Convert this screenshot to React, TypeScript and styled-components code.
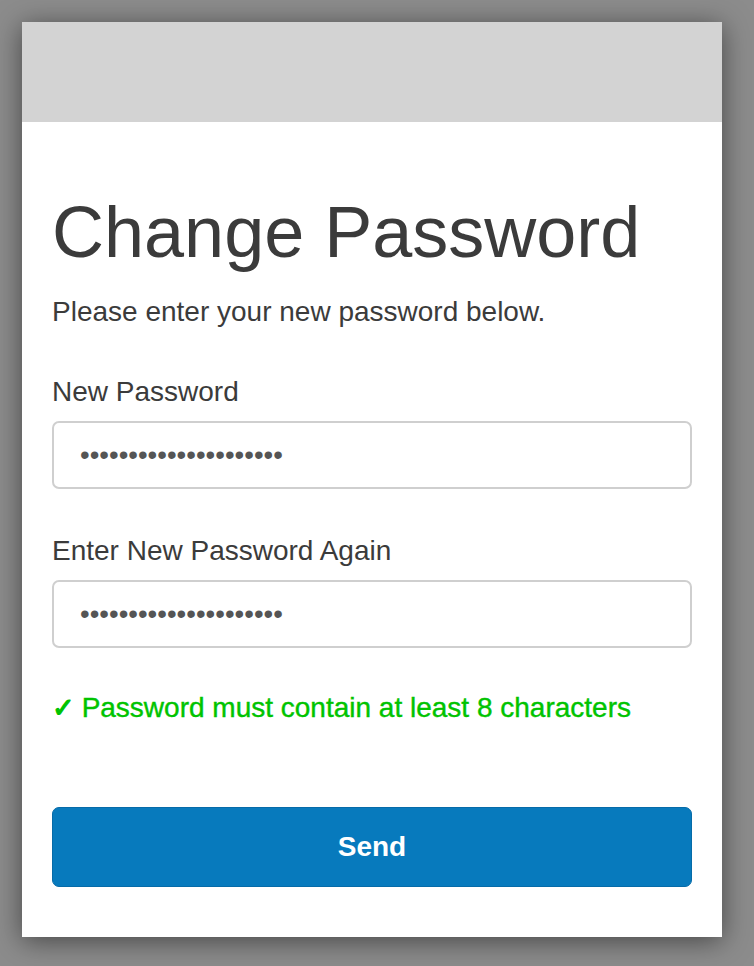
import React from "react";
import styled, { createGlobalStyle } from "styled-components";

const GlobalStyle = createGlobalStyle`
  html, body {
    margin: 0;
    padding: 0;
    background: #8c8c8c;
  }
  body {
    font-family: "Liberation Sans", Arial, Helvetica, sans-serif;
  }
  * { box-sizing: border-box; }
`;

const Page = styled.div`
  padding: 22px 32px 29px 22px;
  min-height: 966px;
`;

const Card = styled.div`
  width: 700px;
  background: #ffffff;
  box-shadow: 0 4px 26px rgba(0, 0, 0, 0.5);
  display: flex;
  flex-direction: column;
`;

const Header = styled.div`
  height: 100px;
  background: #d3d3d3;
`;

const Body = styled.form`
  display: flex;
  flex-direction: column;
  padding: 74px 30px 50px 30px;
  color: #3b3b3b;
`;

const Title = styled.h1`
  margin: 0;
  font-size: 72px;
  line-height: 72px;
  font-weight: 400;
  color: #3b3b3b;
`;

const Subtitle = styled.p`
  margin: 30px 0 0 0;
  font-size: 28px;
  line-height: 28px;
`;

const Field = styled.div<{ $gap: number }>`
  display: flex;
  flex-direction: column;
  margin-top: ${(p) => p.$gap}px;
`;

const Label = styled.label`
  font-size: 28px;
  line-height: 28px;
  color: #3b3b3b;
`;

const Input = styled.input`
  margin-top: 15px;
  width: 640px;
  height: 68px;
  border: 2px solid #cfcfcf;
  border-radius: 7px;
  padding: 0 26px;
  font-family: "Liberation Sans", Arial, sans-serif;
  font-size: 27.6px;
  color: #555555;
  background: #ffffff;
  outline: none;
`;

const Hint = styled.p`
  margin: 46px 0 0 0;
  font-size: 28px;
  line-height: 28px;
  color: #00c300;
  -webkit-text-stroke: 0.4px #00c300;
  display: flex;
  align-items: baseline;
`;

const Check = styled.span`
  font-family: "DejaVu Sans", sans-serif;
  font-size: 27px;
  -webkit-text-stroke: 1.2px #00c300;
  margin-right: 7px;
`;

const SendButton = styled.button`
  margin-top: 85px;
  width: 640px;
  height: 80px;
  border: 1px solid #066ba8;
  border-radius: 7px;
  background: #077abd;
  color: #ffffff;
  font-family: "Liberation Sans", Arial, sans-serif;
  font-weight: 700;
  font-size: 28px;
  cursor: pointer;
`;

export default function App() {
  const pw = "abcdefghijklmnopqrstu";
  return (
    <>
      <GlobalStyle />
      <Page>
        <Card>
          <Header />
          <Body onSubmit={(e) => e.preventDefault()}>
            <Title>Change Password</Title>
            <Subtitle>Please enter your new password below.</Subtitle>
            <Field $gap={52}>
              <Label>New Password</Label>
              <Input type="password" value={pw} readOnly />
            </Field>
            <Field $gap={48}>
              <Label>Enter New Password Again</Label>
              <Input type="password" value={pw} readOnly />
            </Field>
            <Hint>
              <Check>✓</Check>
              <span>Password must contain at least 8 characters</span>
            </Hint>
            <SendButton type="submit">Send</SendButton>
          </Body>
        </Card>
      </Page>
    </>
  );
}
